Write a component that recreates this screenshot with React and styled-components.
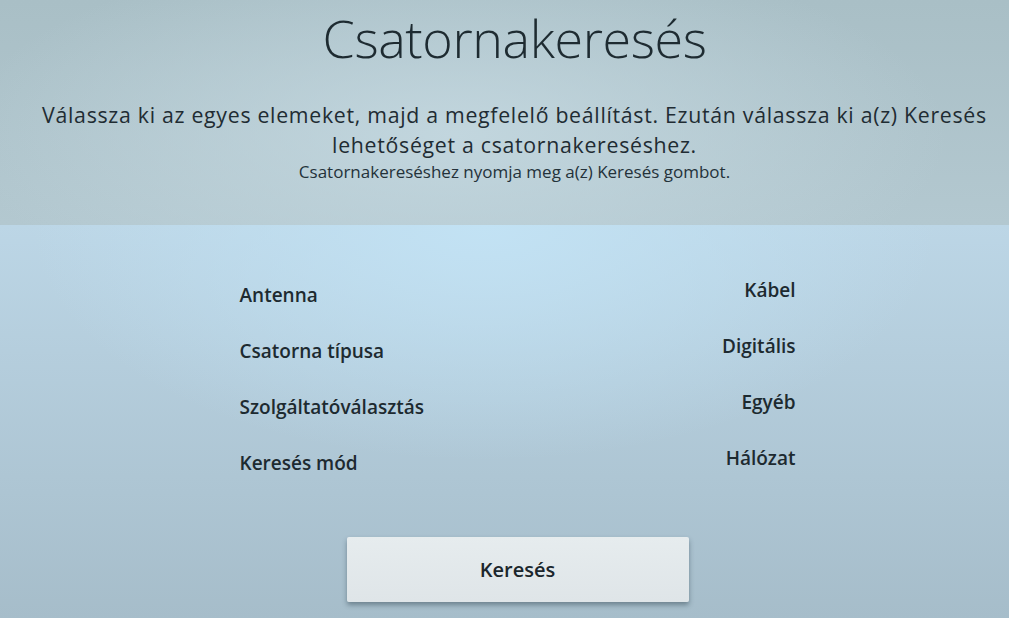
import React from "react";
import styled, { createGlobalStyle } from "styled-components";

const Global = createGlobalStyle`
  html, body { margin: 0; padding: 0; }
  body { font-family: "Open Sans", "Noto Sans", sans-serif; color: #1d2a30; }
  * { box-sizing: border-box; }
`;

const Screen = styled.div`
  width: 1009px;
  height: 618px;
  display: flex;
  flex-direction: column;
  overflow: hidden;
`;

const Header = styled.header`
  height: 225px;
  display: flex;
  flex-direction: column;
  align-items: center;
  padding: 8px 0 0 20px;
  background:
    radial-gradient(ellipse 70% 120% at 45% 60%, rgba(196, 216, 224, 0.9) 0%, rgba(176, 196, 204, 0) 70%),
    linear-gradient(180deg, #a9bfc6 0%, #b3c8d0 100%);
`;

const Title = styled.h1`
  margin: 0;
  font-weight: 300;
  font-size: 52px;
  line-height: 60px;
  letter-spacing: -0.4px;
  color: #1e2b31;
`;

const Description = styled.p`
  margin: 32px 0 0;
  width: 1000px;
  text-align: center;
  font-size: 21.3px;
  line-height: 30px;
  letter-spacing: 0.7px;
  color: #1f2c33;
`;

const Hint = styled.p`
  margin: 0;
  font-size: 17px;
  line-height: 24px;
  color: #24323a;
`;

const Body = styled.main`
  flex: 1;
  display: flex;
  flex-direction: column;
  align-items: center;
  padding: 57px 0 0 26px;
  background:
    radial-gradient(ellipse 60% 80% at 48% 0%, #c2e2f4 0%, rgba(188, 214, 230, 0) 75%),
    linear-gradient(180deg, #bcd6e6 0%, #a6bdca 100%);
`;

const Options = styled.ul`
  list-style: none;
  margin: 0;
  padding: 0;
  width: 556px;
  display: flex;
  flex-direction: column;
  gap: 30px;
`;

const Row = styled.li`
  display: flex;
  justify-content: space-between;
  align-items: center;
  height: 26px;
`;

const Label = styled.span`
  font-size: 19px;
  font-weight: 600;
  color: #1d2a30;
`;

const Value = styled.span`
  font-size: 19px;
  font-weight: 600;
  color: #1d2a30;
  transform: translateY(-5px);
`;

const SearchButton = styled.button`
  margin-top: 61px;
  width: 342px;
  height: 65px;
  border: none;
  border-radius: 2px;
  background: linear-gradient(180deg, #e6ecee 0%, #dfe5e8 100%);
  box-shadow: 0 3px 5px rgba(40, 60, 70, 0.45);
  font-family: "Open Sans", "Noto Sans", sans-serif;
  font-size: 20px;
  font-weight: 600;
  color: #1b262c;
`;

const rows = [
  ["Antenna", "Kábel"],
  ["Csatorna típusa", "Digitális"],
  ["Szolgáltatóválasztás", "Egyéb"],
  ["Keresés mód", "Hálózat"],
];

export default function App() {
  return (
    <Screen>
      <Global />
      <Header>
        <Title>Csatornakeresés</Title>
        <Description>
          Válassza ki az egyes elemeket, majd a megfelelő beállítást. Ezután válassza ki a(z) Keresés
          <br />
          lehetőséget a csatornakereséshez.
        </Description>
        <Hint>Csatornakereséshez nyomja meg a(z) Keresés gombot.</Hint>
      </Header>
      <Body>
        <Options>
          {rows.map(([label, value]) => (
            <Row key={label}>
              <Label>{label}</Label>
              <Value>{value}</Value>
            </Row>
          ))}
        </Options>
        <SearchButton>Keresés</SearchButton>
      </Body>
    </Screen>
  );
}
